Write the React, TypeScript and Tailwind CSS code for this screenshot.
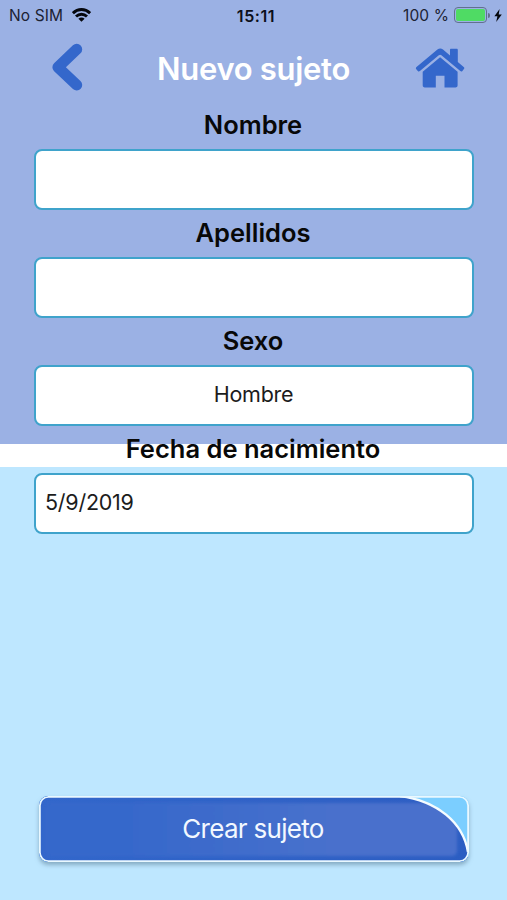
import React from 'react'

const StatusBar = () => {
  return (
    <div className="flex h-[30px] items-center justify-between pl-[9px] pr-[5px] text-[#1b2233]">
      <div className="flex w-[160px] items-center gap-[9px]">
        <span className="pt-px text-[15.5px] tracking-[0.1px]">No SIM</span>
        <svg className="-mt-[1px] h-[14px] w-[19px]" viewBox="0 0 19 14" fill="none" stroke="#05070d" strokeWidth="2.9">
          <path d="M0.9 5.1C5.8 0.3 13.2 0.3 18.1 5.1" />
          <path d="M4 8.5C7.2 5.4 11.8 5.4 15 8.5" />
          <path d="M9.5 13.8L6.4 10.7C8.1 9.2 10.9 9.2 12.6 10.7Z" fill="#05070d" stroke="none" />
        </svg>
      </div>
      <span className="pl-px pt-px text-[16px] font-semibold tracking-[0.6px] text-[#0b0f1a]">15:11</span>
      <div className="flex w-[160px] items-center justify-end">
        <span className="mr-[5px] pt-px text-[15.5px] tracking-[0.1px]">100 %</span>
        <div className="h-[16px] w-[33px] rounded-[4px] border border-[#62708f] p-[1px]">
          <div className="h-full rounded-[2px] bg-[#4fdb64]"></div>
        </div>
        <div className="ml-[1px] h-[5px] w-[2px] rounded-r-full bg-[#62708f]"></div>
        <svg className="ml-[4px] h-[13px] w-[8px]" viewBox="0 0 8 13" fill="#05070d">
          <path d="M5.6 0L0.4 7.2H3.4L2.2 13L7.8 5.4H4.7Z" />
        </svg>
      </div>
    </div>
  )
}

const Header = () => {
  return (
    <header className="flex h-[76px] items-center justify-between pl-[51px] pr-[42px]">
      <button aria-label="Volver" className="w-[50px]">
        <svg className="-mt-[3px] h-[48px] w-[32px]" viewBox="0 0 32 48" fill="none" stroke="#3467cb" strokeWidth="11" strokeLinecap="round" strokeLinejoin="round">
          <path d="M25.7 6.3L6.9 24.3L25.7 41.9" />
        </svg>
      </button>
      <h1 className="-ml-[9px] pt-[1px] text-[31px] font-semibold leading-none tracking-[-0.3px] text-white">Nuevo sujeto</h1>
      <button aria-label="Inicio" className="w-[50px]">
        <svg className="h-[40px] w-[50px]" viewBox="0 0 50 40" fill="#3467cb">
          <path d="M1.3 21.2C0.6 20.3 0.8 19.6 1.5 19L22.4 1.6C24.3 0.2 26.2 0.2 28 1.6L35 7.5V1.8C35 1.1 35.4 0.7 36.1 0.7H41.6C42.4 0.7 42.8 1.1 42.8 1.8V13.9L48.7 19C49.5 19.7 49.5 20.4 48.9 21.1L47.4 22.9C46.8 23.6 46 23.6 45.3 23L26.4 7.3C25.5 6.6 24.7 6.6 23.8 7.3L4.9 23C4.2 23.6 3.4 23.6 2.8 22.9Z" />
          <path d="M7.7 23.7L25.1 9.3L42.6 23.7V37.3C42.6 38.7 41.9 39.4 40.5 39.4H29.5V27.7H20.8V39.4H9.8C8.4 39.4 7.7 38.7 7.7 37.3Z" />
        </svg>
      </button>
    </header>
  )
}

type FieldProps = {
  label: string
  children?: React.ReactNode
}

const Field = ({ label, children }: FieldProps) => {
  return (
    <div className="h-[108px]">
      <h2 className="flex h-[43px] items-center justify-center pb-[5px] pr-[2px] text-[25.5px] font-semibold leading-none text-[#080808]">{label}</h2>
      <div className="flex h-[61px] items-center rounded-[8px] border-2 border-[#3fa3cb] bg-white pb-[2px] pl-[9px] pr-[10px] text-[21.5px] tracking-[-0.25px] text-[#1c1c1c]">
        {children}
      </div>
    </div>
  )
}

const CreateButton = () => {
  return (
    <button className="relative ml-[39px] h-[66px] w-[430px] overflow-hidden rounded-[9px] shadow-[0px_3px_4px_0px_rgba(90,125,150,0.55)]">
      <svg className="absolute inset-0 h-full w-full" viewBox="0 0 430 66">
        <defs>
          <linearGradient id="body" x1="0" y1="0" x2="1" y2="0">
            <stop offset="0.15" stopColor="#3467cb" />
            <stop offset="0.7" stopColor="#4870cc" />
          </linearGradient>
          <linearGradient id="edge" x1="0" y1="0" x2="1" y2="0">
            <stop offset="0" stopColor="#3467cb" />
            <stop offset="1" stopColor="#2b5dc2" />
          </linearGradient>
          <filter id="soft" x="-5%" y="-20%" width="110%" height="140%">
            <feGaussianBlur stdDeviation="1.5" />
          </filter>
          <clipPath id="curve">
            <path d="M0 0H361C398 5 424 26 429 56V66H0Z" />
          </clipPath>
        </defs>
        <rect width="430" height="66" fill="#7bceff" />
        <g clipPath="url(#curve)">
          <rect width="430" height="66" fill="url(#edge)" />
          <rect x="6" y="7" width="412" height="53" rx="5" fill="url(#body)" filter="url(#soft)" />
        </g>
        <path d="M361 0C398 5 424 26 429 56" fill="none" stroke="#f5fcff" strokeWidth="2.4" />
        <rect x="0.9" y="0.9" width="428.2" height="64.2" rx="8.5" fill="none" stroke="#e9f8ff" strokeWidth="1.8" />
      </svg>
      <span className="relative -left-px top-[1px] text-[26px] leading-none tracking-[-0.7px] text-[#f2f8ff]">Crear sujeto</span>
    </button>
  )
}

const App = () => {
  return (
    <main className="flex h-[900px] w-[507px] flex-col overflow-hidden bg-[linear-gradient(#9bb1e4_444px,#ffffff_444px,#ffffff_467px,#bee7ff_467px)] font-['Inter',sans-serif]">
      <StatusBar />
      <Header />
      <section className="w-full pl-[34px] pr-[33px]">
        <Field label="Nombre" />
        <Field label="Apellidos" />
        <Field label="Sexo">
          <span className="w-full text-center">Hombre</span>
        </Field>
        <Field label="Fecha de nacimiento">5/9/2019</Field>
      </section>
      <div className="mt-auto pb-[38px]">
        <CreateButton />
      </div>
    </main>
  )
}

export default App
